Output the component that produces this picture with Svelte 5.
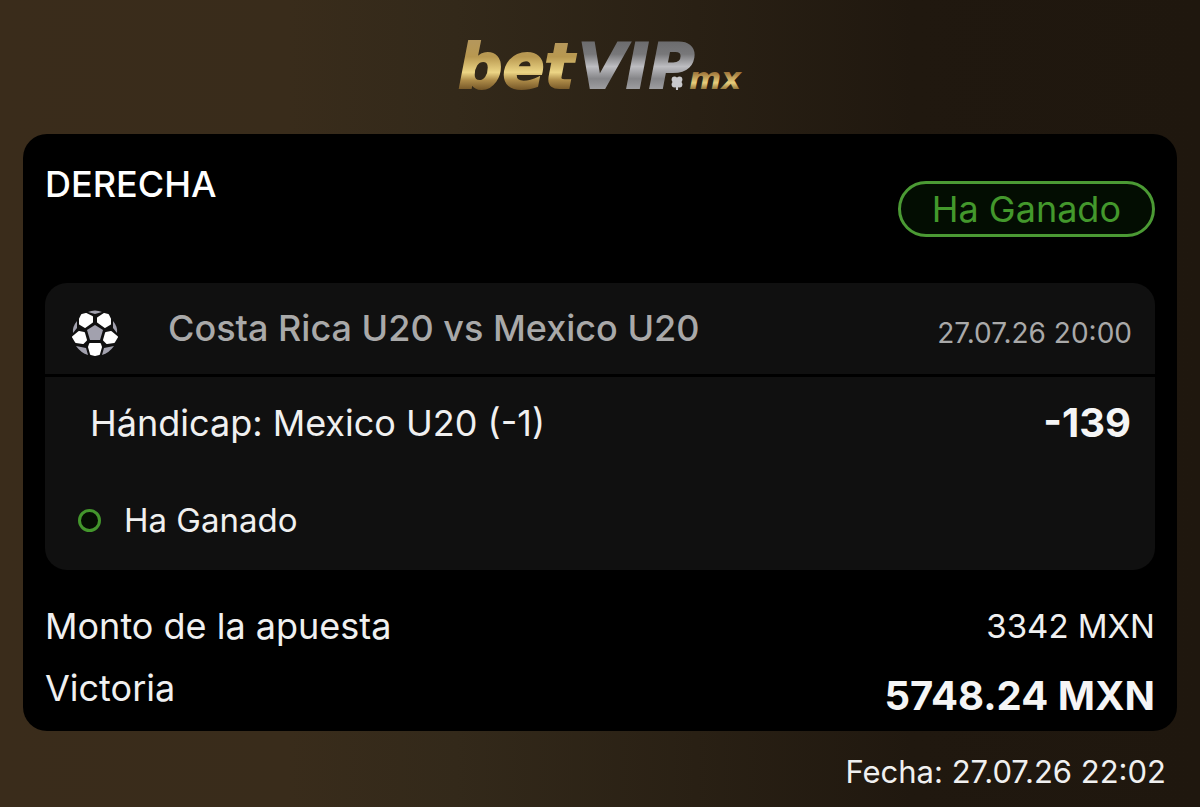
<script lang="ts">
	interface Bet {
		match: string;
		kickoff: string;
		market: string;
		odds: string;
		result: string;
	}

	const bet: Bet = {
		match: 'Costa Rica U20 vs Mexico U20',
		kickoff: '27.07.26 20:00',
		market: 'Hándicap: Mexico U20 (-1)',
		odds: '-139',
		result: 'Ha Ganado'
	};

	const stake = '3342 MXN';
	const payout = '5748.24 MXN';
	const placedAt = '27.07.26 22:02';
</script>

<div class="page">
	<header>
		<svg class="logo" viewBox="0 -16 290 86" role="img" aria-label="betVIP.mx">
			<defs>
				<linearGradient id="gold" gradientUnits="userSpaceOnUse" x1="0" y1="4" x2="0" y2="53">
					<stop offset="0" stop-color="#b5975b" />
					<stop offset="0.3" stop-color="#b89850" />
					<stop offset="0.62" stop-color="#ecd585" />
					<stop offset="0.78" stop-color="#ad8b48" />
					<stop offset="1" stop-color="#6e5023" />
				</linearGradient>
				<linearGradient id="silver" gradientUnits="userSpaceOnUse" x1="0" y1="4" x2="0" y2="53">
					<stop offset="0" stop-color="#6c6c6e" />
					<stop offset="0.25" stop-color="#78787a" />
					<stop offset="0.5" stop-color="#bdbdc1" />
					<stop offset="0.75" stop-color="#858588" />
					<stop offset="1" stop-color="#a2a2a5" />
				</linearGradient>
				<linearGradient id="gold-small" gradientUnits="userSpaceOnUse" x1="0" y1="34" x2="0" y2="52">
					<stop offset="0" stop-color="#9b7137" />
					<stop offset="0.6" stop-color="#e8cf7c" />
					<stop offset="1" stop-color="#8a6a31" />
				</linearGradient>
			</defs>
			<text x="3" y="50" font-size="62" fill="url(#gold)" stroke="url(#gold)" stroke-width="2">bet</text>
			<text x="123" y="50" font-size="62" fill="url(#silver)" stroke="url(#silver)" stroke-width="2">VIP</text>
			<text x="234" y="51" font-size="31" fill="url(#gold-small)">mx</text>
			<g fill="#c9c9cc" transform="translate(222 44)">
				<circle cx="-2.5" cy="-2.5" r="2.9" />
				<circle cx="2.5" cy="-2.5" r="2.9" />
				<circle cx="-2.5" cy="2.5" r="2.9" />
				<circle cx="2.5" cy="2.5" r="2.9" />
				<path d="M-1.5 -1.5H1.5V1.5L1 8H-1L-1.5 1.5Z" />
			</g>
		</svg>
	</header>

	<main class="ticket">
		<div class="ticket-head">
			<h1>DERECHA</h1>
			<span class="badge">{bet.result}</span>
		</div>

		<section class="event">
			<div class="event-head">
				<svg class="ball" viewBox="0 0 46 46" aria-hidden="true">
					<g fill="#a2a1ae">
						<path d="M16 2Q23 -1 30 2L23 4Z" />
						<path d="M5 11Q0 17 1 23L5 18Z" />
						<path d="M41 11Q46 17 45 23L41 18Z" />
						<path d="M4 36L14 38L16 45Q9 43 4 36Z" />
						<path d="M42 36L32 38L30 45Q37 43 42 36Z" />
						<path d="M23 15L31 20L28 30H18L15 20Z" />
					</g>
					<g fill="#fff" stroke="#fff" stroke-width="2" stroke-linejoin="round">
						<path d="M10 5L14 4L20 7V12L13 17L8 14V9Z" />
						<path d="M36 5L32 4L26 8V12L33 17L38 14V9Z" />
						<path d="M7 22L12 23L14 30L11 33L4 32L1 27Z" />
						<path d="M39 22L34 23L32 30L35 33L42 32L45 27Z" />
						<path d="M18 34H28L29 37L27 44L23 45L19 44L17 37Z" />
					</g>
				</svg>
				<h2>{bet.match}</h2>
				<time>{bet.kickoff}</time>
			</div>
			<div class="event-body">
				<div class="market">
					<span>{bet.market}</span>
					<strong>{bet.odds}</strong>
				</div>
				<div class="result">
					<span class="ring"></span>
					<span>{bet.result}</span>
				</div>
			</div>
		</section>

		<dl>
			<div class="total">
				<dt>Monto de la apuesta</dt>
				<dd>{stake}</dd>
			</div>
			<div class="total">
				<dt>Victoria</dt>
				<dd class="payout">{payout}</dd>
			</div>
		</dl>
	</main>

	<footer>Fecha: {placedAt}</footer>
</div>

<style>
	:global(body) {
		margin: 0;
		background: #20180f;
	}

	.page {
		box-sizing: border-box;
		min-height: 100vh;
		padding: 0 23px;
		background: linear-gradient(90deg, #3a2c1b 0%, #392c1b 24%, #33291a 38%, #292014 58%, #20180f 76%, #1f170e 100%);
		color: #f0f0f0;
		font-family: Inter, 'Liberation Sans', sans-serif;
		font-size: 36px;
		line-height: 44px;
	}

	header {
		display: flex;
		justify-content: center;
		padding: 22px 0 26px;
	}

	.logo {
		width: 290px;
		height: 86px;
		font-family: 'DejaVu Sans', sans-serif;
		font-weight: 700;
		font-style: italic;
	}

	.ticket {
		padding: 24px 22px 13px;
		border-radius: 24px;
		background: #000;
	}

	.ticket-head {
		display: flex;
		justify-content: space-between;
		align-items: flex-start;
		padding-bottom: 46px;
	}

	h1,
	h2 {
		margin: 0;
		font-size: 36px;
		font-weight: 500;
	}

	h1 {
		padding-top: 4px;
		color: #fff;
	}

	.badge {
		margin-top: 23px;
		padding: 3px 31px;
		border: 3px solid #4b9a34;
		border-radius: 28px;
		background: #030d02;
		color: #43982c;
	}

	.event {
		border-radius: 22px;
		background: #101010;
	}

	.event-head {
		display: flex;
		align-items: center;
		padding: 27px 23px 18px 27px;
		border-bottom: 3px solid #000;
		color: #a9a9a9;
	}

	.ball {
		width: 46px;
		height: 46px;
		margin-right: 50px;
	}

	h2 {
		flex: 1;
		padding-bottom: 10px;
		line-height: 36px;
	}

	time {
		font-size: 28px;
	}

	.event-body {
		padding: 24px 24px 28px 33px;
	}

	.market {
		display: flex;
		justify-content: space-between;
		padding-left: 12px;
	}

	strong,
	.payout {
		color: #f5f5f5;
		font-size: 40px;
		font-weight: 700;
	}

	.result {
		display: flex;
		align-items: center;
		gap: 23px;
		padding-top: 53px;
		font-size: 33px;
	}

	.ring {
		box-sizing: border-box;
		width: 23px;
		height: 23px;
		border: 3px solid #43962c;
		border-radius: 50%;
		background: #050d03;
	}

	dl {
		margin: 0;
		padding-top: 34px;
	}

	.total {
		display: flex;
		justify-content: space-between;
		align-items: flex-start;
	}

	.total + .total {
		padding-top: 18px;
	}

	dd {
		margin: 0;
		font-size: 33px;
	}

	dd.payout {
		padding-top: 8px;
		font-size: 40px;
	}

	footer {
		padding: 19px 11px 13px;
		font-size: 31px;
		text-align: right;
	}
</style>
